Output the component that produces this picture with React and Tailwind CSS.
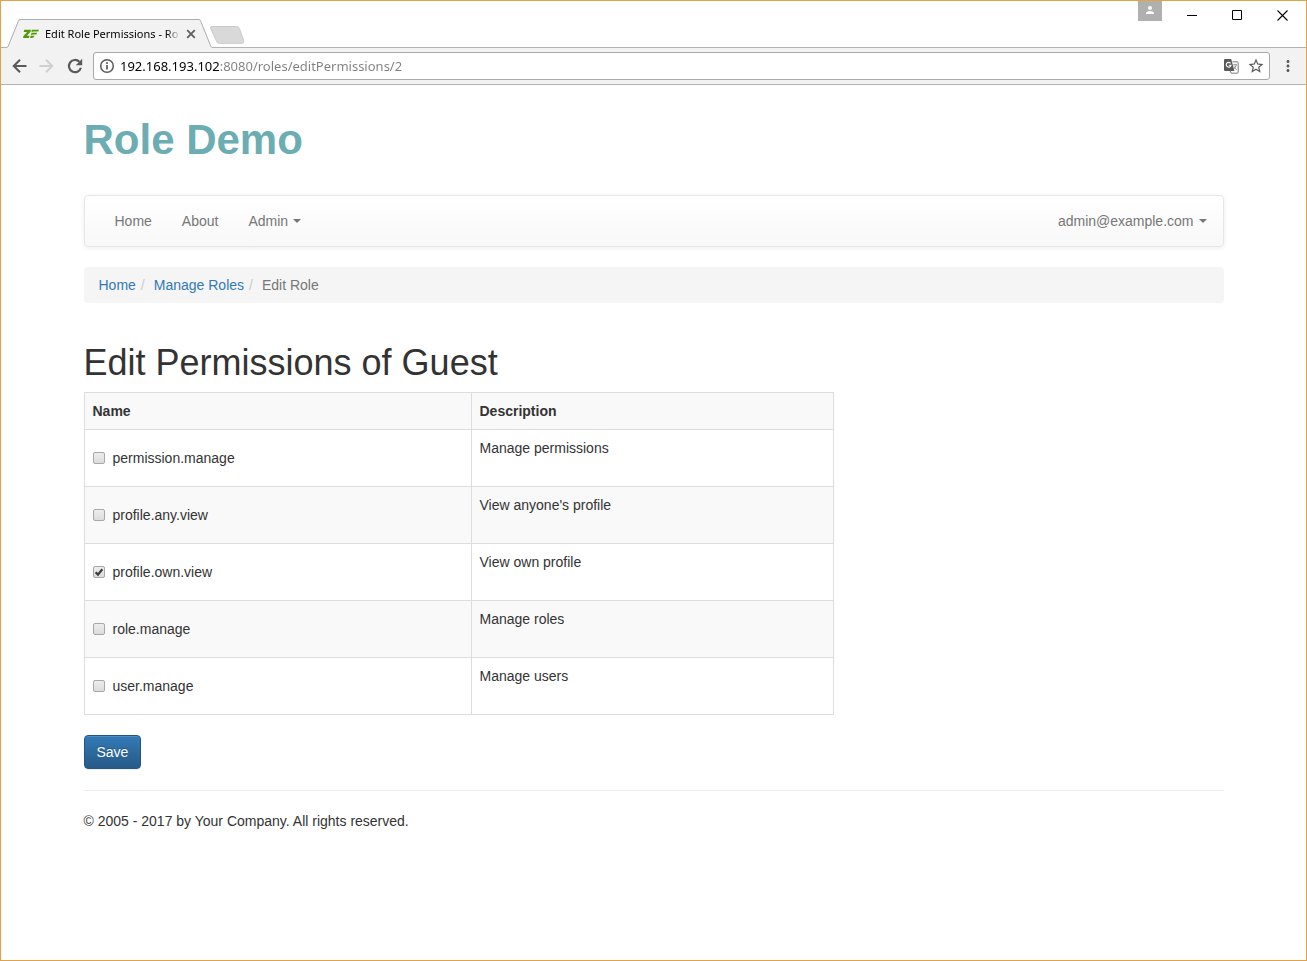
import React, { useState } from "react";
import { MdMoreVert, MdPerson, MdStarBorder } from "react-icons/md";

const PERMISSIONS = [
  { name: "permission.manage", description: "Manage permissions", granted: false },
  { name: "profile.any.view", description: "View anyone's profile", granted: false },
  { name: "profile.own.view", description: "View own profile", granted: true },
  { name: "role.manage", description: "Manage roles", granted: false },
  { name: "user.manage", description: "Manage users", granted: false },
];

function BackIcon() {
  return (
    <svg width="20" height="20" viewBox="0 0 20 20" aria-hidden="true">
      <path d="M17.5 10H5M11 3.8L4.8 10L11 16.2" fill="none" stroke="currentColor" strokeWidth="2.1" />
    </svg>
  );
}

function ForwardIcon() {
  return (
    <svg width="20" height="20" viewBox="0 0 20 20" aria-hidden="true">
      <path d="M2.5 10H15M9 3.8L15.2 10L9 16.2" fill="none" stroke="currentColor" strokeWidth="2.1" />
    </svg>
  );
}

function ReloadIcon() {
  return (
    <svg width="20" height="20" viewBox="0 0 20 20" aria-hidden="true">
      <path d="M15.9 11.8A6.1 6.1 0 1 1 14.4 5.8" fill="none" stroke="currentColor" strokeWidth="2.2" />
      <path d="M17.2 2.8V9.2H10.8Z" fill="currentColor" />
    </svg>
  );
}

function InfoIcon() {
  return (
    <svg width="16" height="16" viewBox="0 0 16 16" className="shrink-0" aria-hidden="true">
      <circle cx="8" cy="8" r="6.3" fill="none" stroke="currentColor" strokeWidth="1.5" />
      <path d="M8 7V11.5M8 4.3V6" stroke="currentColor" strokeWidth="1.7" />
    </svg>
  );
}

function ZendLogo() {
  return (
    <svg width="16" height="10" viewBox="0 0 16 10" className="shrink-0" aria-hidden="true">
      <g fill="#4f9a06">
        <path d="M1.2 .8H8L7.4 3L3.8 6.8H6.6L6 9H0L.6 6.8L4.2 3H.7Z" />
        <path d="M8.8 .8H16L15.2 2.5H10.6Q9.2 2.5 8.4 3.3Z" />
        <path d="M8.6 3.7H14.2L13.4 5.5H10.4Q8.8 5.5 7.8 6.5Z" />
        <path d="M7.8 6.7H11.6Q10.6 8.9 8.6 9H7Z" />
      </g>
    </svg>
  );
}

function TranslateIcon() {
  return (
    <svg width="15" height="15" viewBox="0 0 15 15" aria-hidden="true">
      <path d="M8.5 2.8H13.2Q14.2 2.8 14.2 3.8V13.2Q14.2 14.2 13.2 14.2H7.2L6.2 12" fill="#fff" stroke="#7a7a7a" />
      <path d="M9.2 5.8H13M11.1 4.8V5.8M12.4 5.8Q11.6 8.8 9.2 10.6M9.8 7.4Q11 9.6 12.8 10.8" fill="none" stroke="#8a8a8a" strokeWidth=".9" />
      <path d="M1 0H7.2L10.4 12H1Q0 12 0 11V1Q0 0 1 0Z" fill="#5a5a5a" />
      <path d="M6.6 4.3A2.4 2.4 0 1 0 7 6.3H4.8" fill="none" stroke="#fff" strokeWidth="1.1" />
    </svg>
  );
}

function BrowserTab() {
  return (
    <div className="flex h-[29px]">
      <svg width="14" height="29" viewBox="0 0 14 29" className="shrink-0" aria-hidden="true">
        <path d="M0 29V28.5Q1.6 28.5 2.3 27L12.3 2.2Q13 .5 14 .5V29Z" fill="#f2f2f2" />
        <path d="M0 28.5Q1.6 28.5 2.3 27L12.3 2.2Q13 .5 14 .5" fill="none" stroke="#adadad" />
      </svg>
      <div className="flex w-[179px] items-center border-t border-[#adadad] bg-[#f2f2f2] pl-[3px]">
        <ZendLogo />
        <span className="ml-[6px] flex-1 whitespace-nowrap bg-linear-to-r from-black from-88% to-transparent to-98% bg-clip-text font-['Noto_Sans',sans-serif] text-[11px] leading-4 text-transparent">
          Edit Role Permissions - Ro
        </span>
        <button aria-label="Close tab" className="flex h-4 w-4 shrink-0 items-center justify-center">
          <svg width="10" height="10" viewBox="0 0 10 10" aria-hidden="true">
            <path d="M1.2 1.2L8.8 8.8M8.8 1.2L1.2 8.8" stroke="#5f5f5f" strokeWidth="1.8" />
          </svg>
        </button>
      </div>
      <svg width="14" height="29" viewBox="0 0 14 29" className="shrink-0" aria-hidden="true">
        <path d="M14 29V28.5Q12.4 28.5 11.7 27L1.7 2.2Q1 .5 0 .5V29Z" fill="#f2f2f2" />
        <path d="M14 28.5Q12.4 28.5 11.7 27L1.7 2.2Q1 .5 0 .5" fill="none" stroke="#adadad" />
      </svg>
    </div>
  );
}

function TitleBar() {
  return (
    <div className="flex h-[47px] items-start justify-between bg-white shadow-[inset_0_-1px_0_#b3b3b3]">
      <div className="flex items-end self-end pl-[5px]">
        <BrowserTab />
        <button aria-label="New tab" className="-ml-[3px] mb-1 h-[18px]">
          <svg width="36" height="18" viewBox="0 0 36 18" aria-hidden="true">
            <path
              d="M2 .5H26.5Q28.5 .5 29.3 2.3L33.6 14.5Q34.4 17.3 32 17.3H9.5Q7.5 17.3 6.7 15.5L.7 2.6Q.1 .5 2 .5Z"
              fill="#d9d9d9"
              stroke="#cacaca"
            />
          </svg>
        </button>
      </div>
      <div className="flex">
        <button aria-label="Profile" className="mr-[7px] flex h-5 w-6 items-center justify-center bg-[#b0b0b0] text-white">
          <MdPerson className="mb-[2px] h-3 w-3" />
        </button>
        <button aria-label="Minimize" className="flex h-[29px] w-[46px] items-center justify-center">
          <svg width="11" height="11" viewBox="0 0 11 11" aria-hidden="true">
            <path d="M0 5.5H10" stroke="#000" />
          </svg>
        </button>
        <button aria-label="Maximize" className="flex h-[29px] w-[45px] items-center justify-center">
          <svg width="11" height="11" viewBox="0 0 11 11" aria-hidden="true">
            <path d="M.5 .5H9.5V9.5H.5Z" fill="none" stroke="#000" />
          </svg>
        </button>
        <button aria-label="Close" className="flex h-[29px] w-[46px] items-center justify-center pr-px">
          <svg width="11" height="11" viewBox="0 0 11 11" aria-hidden="true">
            <path d="M.5 .5L10.5 10.5M10.5 .5L.5 10.5" stroke="#000" strokeWidth="1.1" />
          </svg>
        </button>
      </div>
    </div>
  );
}

function AddressBar() {
  return (
    <div className="flex h-[37px] items-center border-b border-[#b3b3b3] bg-[#f2f2f2] pl-2 text-[#5a5a5a]">
      <button aria-label="Back" className="mr-2">
        <BackIcon />
      </button>
      <button aria-label="Forward" className="mr-2 text-[#d0d0d0]">
        <ForwardIcon />
      </button>
      <button aria-label="Reload" className="mr-2">
        <ReloadIcon />
      </button>
      <div className="flex h-7 flex-1 items-center rounded-[3px] border border-[#a9a9a9] bg-white pl-[5px] pr-1">
        <InfoIcon />
        <input
          aria-label="Address"
          defaultValue="192.168.193.102:8080/roles/editPermissions/2"
          className="ml-[5px] min-w-0 flex-1 bg-[linear-gradient(to_right,#000_100px,#808080_100px)] bg-clip-text font-['Noto_Sans',sans-serif] text-[13px] leading-5 text-transparent outline-none"
        />
        <button aria-label="Translate this page" className="mr-2">
          <TranslateIcon />
        </button>
        <button aria-label="Bookmark this page">
          <MdStarBorder className="h-[18px] w-[18px]" />
        </button>
      </div>
      <button aria-label="Menu" className="mx-[9px]">
        <MdMoreVert className="h-[18px] w-[18px]" />
      </button>
    </div>
  );
}

function Caret() {
  return (
    <svg width="8" height="4" viewBox="0 0 8 4" className="ml-[5px]" aria-hidden="true">
      <path d="M0 0H8L4 4Z" fill="currentColor" />
    </svg>
  );
}

function NavBar() {
  return (
    <nav className="flex justify-between rounded border border-[#e7e7e7] bg-linear-to-b from-white to-[#f8f8f8] pl-[15px] pr-px leading-5 text-[#777] shadow-[0_1px_5px_rgba(0,0,0,0.075)]">
      <div className="flex">
        <a href="#home" className="px-[15px] py-[15px]">Home</a>
        <a href="#about" className="px-[15px] py-[15px]">About</a>
        <button className="flex items-center px-[15px] py-[15px]">
          Admin
          <Caret />
        </button>
      </div>
      <button className="flex items-center px-[15px] py-[15px]">
        admin@example.com
        <Caret />
      </button>
    </nav>
  );
}

function Breadcrumb() {
  return (
    <ol className="mt-5 flex rounded bg-[#f5f5f5] px-[15px] py-2 leading-5">
      <li>
        <a href="#home" className="text-[#337ab7]">Home</a>
      </li>
      <li>
        <span className="pl-[5px] pr-[9px] text-[#ccc]">/</span>
        <a href="#roles" className="text-[#337ab7]">Manage Roles</a>
      </li>
      <li className="text-[#777]">
        <span className="pl-[5px] pr-[9px] text-[#ccc]">/</span>
        Edit Role
      </li>
    </ol>
  );
}

function PermissionRow({ name, description, granted }) {
  const [checked, setChecked] = useState(granted);
  return (
    <tr className="odd:bg-white even:bg-[#f9f9f9]">
      <td className="h-[57px] border border-[#ddd] px-2 align-middle">
        <label className="flex items-center gap-2 leading-5">
          <span className="relative flex h-3 w-3 shrink-0">
            <input
              type="checkbox"
              checked={checked}
              onChange={(e) => setChecked(e.target.checked)}
              className="h-3 w-3 appearance-none rounded-[2px] border border-[#a8a8a8] bg-linear-to-b from-[#ededed] to-[#dcdcdc]"
            />
            {checked && (
              <svg width="12" height="12" viewBox="0 0 12 12" className="pointer-events-none absolute inset-0" aria-hidden="true">
                <path d="M2.6 6.2L5 8.6L9.3 3.2" fill="none" stroke="#3c3c3c" strokeWidth="2.2" />
              </svg>
            )}
          </span>
          {name}
        </label>
      </td>
      <td className="border border-[#ddd] p-2 align-top leading-5">{description}</td>
    </tr>
  );
}

function PermissionTable() {
  return (
    <table className="w-full max-w-[750px] border-collapse text-left">
      <thead>
        <tr className="bg-[#f9f9f9] leading-5">
          <th className="w-[387px] border border-[#ddd] p-2">Name</th>
          <th className="border border-[#ddd] p-2">Description</th>
        </tr>
      </thead>
      <tbody>
        {PERMISSIONS.map((permission) => (
          <PermissionRow key={permission.name} {...permission} />
        ))}
      </tbody>
    </table>
  );
}

export default function App() {
  return (
    <div className="flex min-h-screen flex-col border border-[#e0a347] bg-white font-['Liberation_Sans',Arial,sans-serif] text-sm text-[#333]">
      <TitleBar />
      <AddressBar />
      <div className="mx-auto w-full max-w-[1140px] pt-[31px]">
        <header className="pb-[31px] text-[42px] font-bold leading-[48px] text-[#6badb2]">Role Demo</header>
        <NavBar />
        <Breadcrumb />
        <main className="pt-10">
          <h1 className="mb-[10px] text-4xl leading-[39px]">Edit Permissions of Guest</h1>
          <form onSubmit={(e) => e.preventDefault()}>
            <PermissionTable />
            <button
              type="submit"
              className="mt-5 rounded border border-[#245580] bg-linear-to-b from-[#337ab7] to-[#265a88] px-3 py-[6px] leading-5 text-white shadow-[inset_0_1px_0_rgba(255,255,255,0.15),0_1px_1px_rgba(0,0,0,0.075)] [text-shadow:0_-1px_0_rgba(0,0,0,0.2)]"
            >
              Save
            </button>
          </form>
        </main>
        <hr className="mb-5 mt-[21px] border-[#eee]" />
        <footer className="leading-5">© 2005 - 2017 by Your Company. All rights reserved.</footer>
      </div>
    </div>
  );
}
